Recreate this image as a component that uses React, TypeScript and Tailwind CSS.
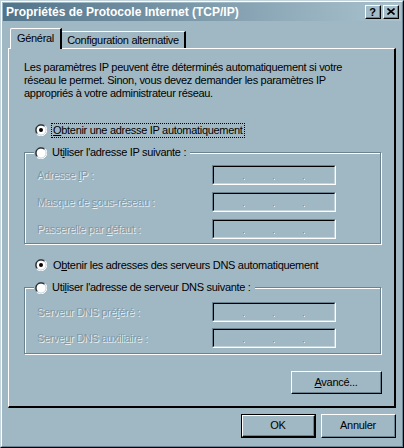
import React from "react";

const BG = "bg-[#a0b8c4]";

function Radio({ checked }: { checked?: boolean }) {
  return (
    <svg width="12" height="12" viewBox="0 0 12 12" className="shrink-0">
      <circle cx="6" cy="6" r="5" fill="#ffffff" />
      <path d="M1.76 10.24 A6 6 0 0 1 10.24 1.76" stroke="#6b8290" strokeWidth="1" fill="none" />
      <path d="M2.46 9.54 A5 5 0 0 1 9.54 2.46" stroke="#000000" strokeWidth="1" fill="none" />
      <path d="M10.24 1.76 A6 6 0 0 1 1.76 10.24" stroke="#ffffff" strokeWidth="1" fill="none" />
      <path d="M9.54 2.46 A5 5 0 0 1 2.46 9.54" stroke="#d2dde3" strokeWidth="1" fill="none" />
      {checked && <circle cx="6" cy="6" r="2" fill="#000" />}
    </svg>
  );
}

function Dis({ children }: { children: React.ReactNode }) {
  return (
    <span className="text-[#8199a6] [text-shadow:1px_1px_0_#e6eef2]">{children}</span>
  );
}

function IpBox() {
  return (
    <div className="w-[124px] h-[20px] shrink-0 border-t border-l border-t-[#6b8290] border-l-[#6b8290] border-b border-r border-b-[#ffffff] border-r-[#ffffff]">
      <div className="h-full border-t border-l border-t-black border-l-black border-b border-r border-b-[#c4d2da] border-r-[#c4d2da] flex items-end pb-[4px]">
        <div className="flex w-full pl-[29px] gap-[29px]">
          <span className="w-[1px] h-[1px] bg-[#8199a6] shadow-[1px_1px_0_#e6eef2]" />
          <span className="w-[1px] h-[1px] bg-[#8199a6] shadow-[1px_1px_0_#e6eef2]" />
          <span className="w-[1px] h-[1px] bg-[#8199a6] shadow-[1px_1px_0_#e6eef2]" />
        </div>
      </div>
    </div>
  );
}

function Button({ children, def, w, h }: { children: React.ReactNode; def?: boolean; w: string; h: string }) {
  return (
    <div className={`${w} ${h} ${def ? "border border-black" : ""}`}>
      <div className="h-full w-full border-t border-l border-t-[#ffffff] border-l-[#ffffff] border-b border-r border-b-black border-r-black">
        <div className="h-full w-full border-b border-r border-b-[#6b8290] border-r-[#6b8290] flex items-center justify-center">
          {children}
        </div>
      </div>
    </div>
  );
}

function Row({ label }: { label: React.ReactNode }) {
  return (
    <div className="flex items-center h-[20px]">
      <div className="w-[188px] pl-[13px]">
        <Dis>{label}</Dis>
      </div>
      <IpBox />
    </div>
  );
}

function Group({ legend, children, h }: { legend: React.ReactNode; children: React.ReactNode; h: string }) {
  return (
    <div className={`relative ml-[15px] w-[357px] ${h}`}>
      <div className="absolute inset-0 top-[6px] border border-[#6b8290] shadow-[1px_1px_0_#ffffff,inset_1px_1px_0_#ffffff]" />
      <div className="relative flex items-center h-[13px] pl-[10px]">
        <div className={`flex items-center gap-[5px] ${BG} pr-[4px] pl-[1px]`}>
          <Radio />
          {legend}
        </div>
      </div>
      <div className="relative">{children}</div>
    </div>
  );
}

export default function App() {
  return (
    <div
      className={`w-[404px] h-[448px] ${BG} border-t border-l border-t-[#c4d4dc] border-l-[#c4d4dc] border-b border-r border-b-black border-r-black text-[11px] tracking-[-0.3px] text-black leading-[13px] overflow-hidden font-['Liberation_Sans',Arial,sans-serif]`}
    >
      <div className="h-full w-full border-t border-l border-t-[#ffffff] border-l-[#ffffff] border-b border-r border-b-[#6b8290] border-r-[#6b8290] p-[1px] flex flex-col">
        {/* Title bar */}
        <div className="h-[18px] shrink-0 flex items-center justify-between pl-[3px] pr-[2px] bg-[linear-gradient(to_right,#52748a,#aac2ce)]">
          <span className="font-bold text-white text-[12px] leading-[14px] tracking-normal">
            Propriétés de Protocole Internet (TCP/IP)
          </span>
          <div className="flex items-center gap-[2px]">
            <Button w="w-[16px]" h="h-[14px]">
              <span className="font-bold text-[11px] leading-[10px] tracking-normal">?</span>
            </Button>
            <Button w="w-[16px]" h="h-[14px]">
              <svg width="8" height="7" viewBox="0 0 8 7">
                <path d="M0.5 0.5 L7.5 6.5 M7.5 0.5 L0.5 6.5" stroke="#000" strokeWidth="1.6" />
              </svg>
            </Button>
          </div>
        </div>

        {/* Tabs */}
        <div className="mt-[7px] ml-[7px] flex items-start h-[20px] relative z-10 shrink-0">
          <div className={`h-[21px] w-[52px] border-t border-l border-t-[#ffffff] border-l-[#ffffff] border-r-2 border-r-black rounded-tl-[2px] ${BG} flex items-start justify-center pt-[3px]`}>
            Général
          </div>
          <div className="mt-[3px] h-[17px] w-[124px] border-t border-t-[#ffffff] border-r-2 border-r-black flex items-start justify-center pt-[2px] whitespace-nowrap">
            Configuration alternative
          </div>
        </div>

        {/* Panel */}
        <div className="ml-[5px] w-[388px] h-[360px] shrink-0 border-t border-l border-t-[#ffffff] border-l-[#ffffff] border-b-2 border-r-2 border-b-black border-r-black flex flex-col">
          <div className="pl-[15px] pt-[12px] whitespace-nowrap">
            Les paramètres IP peuvent être déterminés automatiquement si votre
            <br />
            réseau le permet. Sinon, vous devez demander les paramètres IP
            <br />
            appropriés à votre administrateur réseau.
          </div>

          <div className="mt-[23px] ml-[26px] flex items-center gap-[5px] h-[14px]">
            <Radio checked />
            <span className="outline outline-1 outline-dotted outline-black px-[1px]">
              <u>O</u>btenir une adresse IP automatiquement
            </span>
          </div>

          <div className="mt-[9px]">
            <Group
              h="h-[98px]"
              legend={<span>Ut<u>i</u>liser l'adresse IP suivante :</span>}
            >
              <div className="flex flex-col gap-[7px] pt-[6px]">
                <Row label={<>Adresse <u>I</u>P :</>} />
                <Row label={<>Masque de <u>s</u>ous-réseau :</>} />
                <Row label={<>Passerelle par <u>d</u>éfaut :</>} />
              </div>
            </Group>
          </div>

          <div className="mt-[14px] ml-[26px] flex items-center gap-[5px] h-[14px]">
            <Radio checked />
            <span className="px-[1px]">
              O<u>b</u>tenir les adresses des serveurs DNS automatiquement
            </span>
          </div>

          <div className="mt-[9px]">
            <Group
              h="h-[73px]"
              legend={<span>Uti<u>l</u>iser l'adresse de serveur DNS suivante :</span>}
            >
              <div className="flex flex-col gap-[6px] pt-[8px]">
                <Row label={<>Serveur DNS pré<u>f</u>éré :</>} />
                <Row label={<>Serve<u>u</u>r DNS auxiliaire :</>} />
              </div>
            </Group>
          </div>

          <div className="mt-[17px] flex justify-end pr-[12px]">
            <Button w="w-[91px]" h="h-[23px]">
              <span><u>A</u>vancé...</span>
            </Button>
          </div>
        </div>

        {/* Bottom buttons */}
        <div className="mt-[6px] flex justify-end gap-[5px] pr-[5px]">
          <Button def w="w-[75px]" h="h-[24px]">
            <span>OK</span>
          </Button>
          <Button w="w-[75px]" h="h-[24px]">
            <span>Annuler</span>
          </Button>
        </div>
      </div>
    </div>
  );
}
